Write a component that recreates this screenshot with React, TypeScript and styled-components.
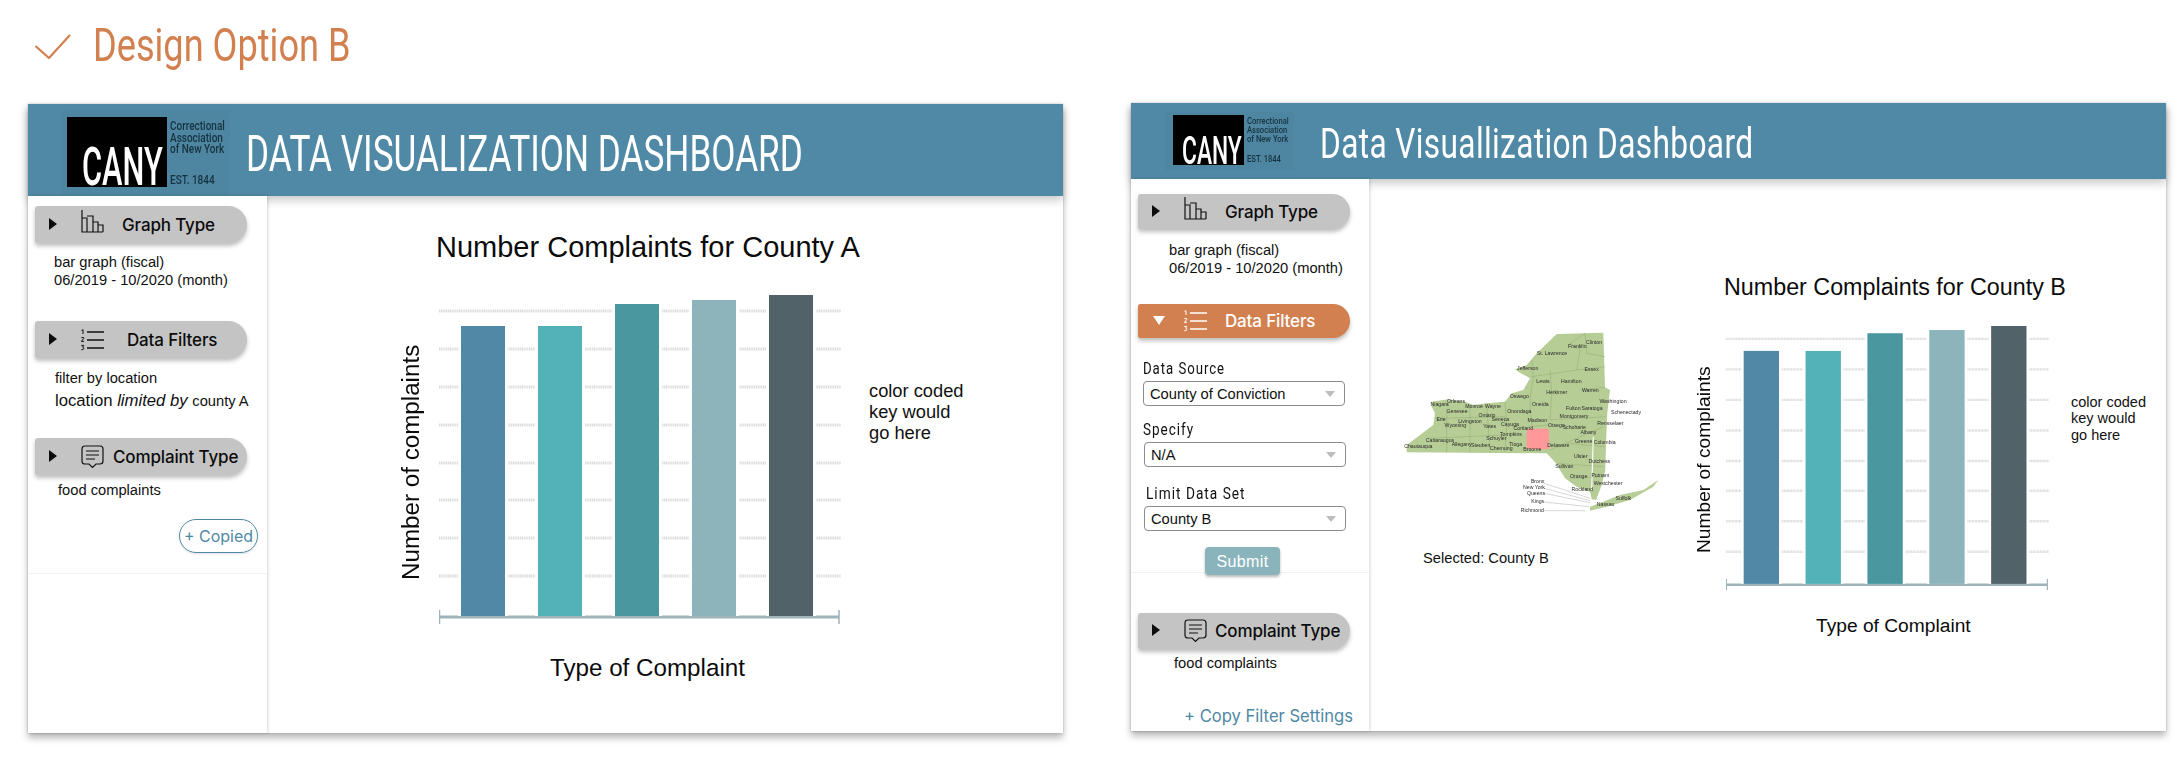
import React from 'react';
import styled, { createGlobalStyle } from 'styled-components';

const Global = createGlobalStyle`
  html, body { margin: 0; padding: 0; background: #fff; }
  body { font-family: "Liberation Sans", Arial, sans-serif; color: #111; }
`;
const NARROW = `Roboto, "Liberation Sans", sans-serif`;
const UI = `Inter, "Liberation Sans", sans-serif`;
const TEAL = '#5089a5';
const ORANGE = '#d2804f';

const Page = styled.div`width: 2184px; height: 780px; overflow: hidden; display: flex; flex-direction: column; padding-left: 28px; box-sizing: border-box;`;
const Heading = styled.div`height: 103px; display: flex; align-items: flex-start; gap: 22px; padding: 22px 0 0 7px; box-sizing: border-box;`;
const CheckMark = styled.svg`margin-top: 12px; flex: none;`;
const HeadingText = styled.h1`
  margin: 0; font: 400 46px/46px ${NARROW}; color: ${ORANGE}; white-space: nowrap;
  transform: scaleX(.786); transform-origin: 0 50%;
`;
const Boards = styled.div`display: flex; gap: 68px; align-items: flex-start;`;
const Card = styled.section<{ $h: number; $mt: number }>`
  width: 1035px; height: ${p => p.$h}px; margin-top: ${p => p.$mt}px; display: flex; flex-direction: column;
  box-shadow: 0 5px 7px rgba(0,0,0,.28), 0 0 2px rgba(0,0,0,.18); background: #fff; position: relative;
`;
const Header = styled.header<{ $h: number; $pt: number; $pl: number; $gap: number }>`
  height: ${p => p.$h}px; background: ${TEAL}; display: flex; align-items: flex-start; flex: none; overflow: visible;
  padding: ${p => p.$pt}px 0 0 ${p => p.$pl}px; gap: ${p => p.$gap}px; box-sizing: border-box;
  box-shadow: 0 4px 9px rgba(0,0,0,.22); position: relative;
`;
const HeaderTitle = styled.div<{ $size: number; $mt: number; $ls: number; $k: number; $w: number }>`
  font: 400 ${p => p.$size}px/1 ${NARROW}; color: #fff; margin-top: ${p => p.$mt}px; letter-spacing: ${p => p.$ls}px; white-space: nowrap;
  width: ${p => p.$w}px; transform: scaleX(${p => p.$k}); transform-origin: 0 50%;
`;
const Plate = styled.div<{ $big: boolean }>`
  display: flex; background: #4e85a1; flex: none;
  width: ${p => (p.$big ? 168 : 129)}px; height: ${p => (p.$big ? 85 : 58)}px;
  padding: ${p => (p.$big ? '7px 0 0 5px' : '3px 0 0 8px')}; box-sizing: border-box;
`;
const Black = styled.div<{ $big: boolean }>`
  width: ${p => (p.$big ? 100 : 71)}px; height: ${p => (p.$big ? 70 : 50)}px; background: #000; flex: none;
  color: #fff; font: 500 ${p => (p.$big ? 54 : 38)}px/1 ${NARROW}; display: flex; align-items: flex-end;
  padding-left: ${p => (p.$big ? 15 : 9)}px; box-sizing: border-box;
`;
const Cany = styled.span<{ $big: boolean }>`
  display: block; width: ${p => (p.$big ? 146 : 103)}px; flex: none; white-space: nowrap;
  margin-bottom: ${p => (p.$big ? -7 : -5)}px; transform: scaleX(${p => (p.$big ? 0.57 : 0.6)}); transform-origin: 0 50%;
`;
const LogoSide = styled.div<{ $big: boolean }>`
  display: flex; flex-direction: column; justify-content: space-between; margin-left: 3px; width: 60px; height: ${p => (p.$big ? 70 : 50)}px; box-sizing: border-box;
  color: #16323f; font: 500 ${p => (p.$big ? 12.5 : 9.5)}px/${p => (p.$big ? 11.5 : 8.8)}px ${NARROW};
  padding: ${p => (p.$big ? '3px 0 2px' : '2px 0 1px')}; white-space: nowrap; transform: scaleX(.8); transform-origin: 0 50%;
`;
const Body = styled.div`display: flex; flex: 1; min-height: 0; position: relative;`;
const Sidebar = styled.aside<{ $w: number; $pt: number; $rule: number }>`
  width: ${p => p.$w}px; flex: none; box-sizing: border-box; padding-top: ${p => p.$pt}px; background: #fff; position: relative; z-index: 1;
  box-shadow: 1px 0 3px rgba(0,0,0,.16);
  &::after { content: ''; position: absolute; left: 0; right: 0; top: ${p => p.$rule}px; height: 1px; background: #f2f2f2; }
`;
const Pill = styled.div<{ $on?: boolean; $h: number; $mt: number }>`
  width: 212px; height: ${p => p.$h}px; margin: ${p => p.$mt}px 0 0 7px; box-sizing: border-box; padding-left: 14px;
  display: flex; align-items: center; background: ${p => (p.$on ? ORANGE : '#c4c4c4')};
  color: ${p => (p.$on ? '#fff' : '#0c0c0c')}; border-radius: 3px 20px 20px 3px; box-shadow: 0 3px 4px rgba(0,0,0,.26);
`;
const Arrow = styled.span`width: 32px; display: flex; flex: none; margin-bottom: 2px;`;
const PillLabel = styled.span<{ $ml: number }>`
  margin-left: ${p => p.$ml}px; padding-top: 1px; font: 500 17px/1 ${UI}; letter-spacing: -0.15px; white-space: nowrap;
`;
const RaisedIcon = styled.svg`margin-bottom: 6px; flex: none;`;
const PillIcon = styled.svg`flex: none;`;
const Detail = styled.div<{ $ml: number; $mt: number }>`
  margin: ${p => p.$mt}px 0 0 ${p => p.$ml}px; font-size: 14.7px; line-height: 18px; color: #111; white-space: nowrap;
`;
const DetailBig = styled.div`margin-top: 3px; font-size: 16.7px; line-height: 21px;`;
const Small = styled.span`font-size: 14.7px;`;
const CopiedRow = styled.div`display: flex; justify-content: flex-end; padding-right: 9px; margin-top: 20px;`;
const Copied = styled.div`
  width: 79px; height: 34px; box-sizing: border-box; border: 1px solid ${TEAL}; border-radius: 17px; color: ${TEAL};
  font: 400 16px/32px ${UI}; text-align: center; white-space: nowrap; box-shadow: 0 1px 2px rgba(0,0,0,.12);
`;
const CopyLink = styled.div`color: ${TEAL}; font: 400 16.6px/22px ${UI}; margin: 33px 0 0 53px; white-space: nowrap;`;
const FieldLabel = styled.div<{ $ml: number; $mt: number; $k: number }>`
  margin: ${p => p.$mt}px 0 0 ${p => p.$ml}px; font: 400 16.5px/20px ${NARROW}; letter-spacing: 1.2px; color: #111;
  white-space: nowrap; transform: scaleX(${p => p.$k}); transform-origin: 0 50%;
`;
const Select = styled.div<{ $ml: number; $mt: number }>`
  width: 202px; height: 25px; margin: ${p => p.$mt}px 0 0 ${p => p.$ml}px; box-sizing: border-box; border: 1px solid #8c8c8c; border-radius: 4px;
  display: flex; align-items: center; justify-content: space-between; padding: 0 9px 0 6px; font-size: 14.7px; color: #111; background: #fff;
  &::after { content: ''; width: 0; height: 0; border-left: 5px solid transparent; border-right: 5px solid transparent; border-top: 6px solid #bdbdbd; }
`;
const SubmitRow = styled.div`display: flex; margin: 16px 0 0 74px; position: relative; z-index: 2;`;
const Submit = styled.div`
  width: 75px; height: 28px; background: #8ab4bc; border-radius: 4px; color: #fff; text-align: center;
  font-size: 16px; line-height: 29px; letter-spacing: .4px; box-shadow: 0 2px 3px rgba(0,0,0,.28);
`;
const Main = styled.main<{ $pl: number; $pt: number }>`flex: 1; display: flex; align-items: flex-start; padding: ${p => p.$pt}px 0 0 ${p => p.$pl}px; min-width: 0;`;
const MapCol = styled.div`width: 290px; flex: none; margin: 36px 14px 0 0;`;
const MapSvg = styled.svg`display: block; filter: blur(.35px);`;
const PlotSvg = styled.svg`display: block; flex: none;`;
const Selected = styled.div`font-size: 14.7px; line-height: 18px; margin: 19px 0 0 33px;`;
const Chart = styled.div`display: flex; flex-direction: column; flex: none;`;
const ChartTitle = styled.div<{ $size: number; $ml: number; $lh: number }>`
  font-size: ${p => p.$size}px; line-height: ${p => p.$lh}px; margin-left: ${p => p.$ml}px; white-space: nowrap; color: #0b0b0b;
`;
const ChartRow = styled.div<{ $mt: number }>`display: flex; align-items: flex-start; margin-top: ${p => p.$mt}px;`;
const YLabel = styled.div<{ $size: number; $w: number; $mt: number; $mr: number; $len: number }>`
  writing-mode: vertical-rl; transform: rotate(180deg); font-size: ${p => p.$size}px; line-height: ${p => p.$w}px; width: ${p => p.$w}px;
  height: ${p => p.$len}px; margin: ${p => p.$mt}px ${p => p.$mr}px 0 0; white-space: nowrap; flex: none; color: #0b0b0b;
`;
const Legend = styled.div<{ $size: number; $lh: number; $ml: number; $mt: number }>`
  font-size: ${p => p.$size}px; line-height: ${p => p.$lh}px; margin: ${p => p.$mt}px 0 0 ${p => p.$ml}px; white-space: nowrap; color: #111;
`;
const XLabel = styled.div<{ $size: number; $ml: number; $mt: number }>`
  font-size: ${p => p.$size}px; line-height: 1.1; margin: ${p => p.$mt}px 0 0 ${p => p.$ml}px; white-space: nowrap; color: #0b0b0b;
`;

const Play = () => <svg width="8" height="12" viewBox="0 0 8 12"><path d="M0 0l8 6-8 6z" fill="#0c0c0c" /></svg>;
const Down = () => <svg width="14" height="9" viewBox="0 0 14 9"><path d="M1 0h12L7 9z" fill="#fff" /></svg>;
const GraphIcon = () => (
  <RaisedIcon width="23" height="23" viewBox="0 0 23 23" fill="none" stroke="#111" strokeWidth="1.2">
    <path d="M1 0v22h21M1 8h5v14M6 8v14M6 6h6v16M12 12h5v10M17 15h5v7" />
  </RaisedIcon>
);
const ListIcon = ({ c }: { c: string }) => (
  <PillIcon width="23" height="22" viewBox="0 0 23 22" fill="none" stroke={c} strokeWidth="1.3">
    <path d="M6 3h17M6 11h17M6 19h17" />
    <path d="M.5 1.500L2 .7V5M.3 8.600h2.400v1L.3 12.400h2.600M.3 16.400h2.500l-1.200 1.800q1.600.2 1.200 1.600-.4 1.400-2.500.8" strokeWidth="1" />
  </PillIcon>
);
const CommentIcon = () => (
  <PillIcon width="23" height="24" viewBox="0 0 23 24" fill="none" stroke="#111" strokeWidth="1.2">
    <path d="M4 1h15q3 0 3 3v12q0 3-3 3h-4l-3.500 3.500L8 19H4q-3 0-3-3V4q0-3 3-3z" />
    <path d="M5 6h13M5 10h13M5 14h9" />
  </PillIcon>
);

const Plot = ({ w }: { w: number }) => {
  const bars = [
    { x: 22, top: 31, c: '#5088a6' }, { x: 99, top: 31, c: '#52b2b8' }, { x: 176, top: 9, c: '#4a979f' },
    { x: 253, top: 5, c: '#8db4bb' }, { x: 330, top: 0, c: '#526269' },
  ];
  const grid = [16, 54, 92, 130, 168, 205, 243, 281];
  return (
    <PlotSvg width={w} height={(w * 330) / 402} viewBox="0 0 402 330">
      {grid.map(y => <line key={y} x1="0" x2="402" y1={y} y2={y} stroke="#dcdcdc" strokeWidth="3" strokeDasharray="1.2 .6" />)}
      <path d="M0.500 322H400" stroke="#9fb3ba" strokeWidth="3" />
      <path d="M0.500 315v14M400 315v14" stroke="#9fb3ba" strokeWidth="1.500" />
      {bars.map(b => <rect key={b.x} x={b.x - 3} y={b.top} width={50} height={321 - b.top} fill="#fff" />)}
      {bars.map(b => <rect key={b.x + 1} x={b.x} y={b.top} width={44} height={321 - b.top} fill={b.c} />)}
    </PlotSvg>
  );
};

const px = (x: number) => x / 3;
const py = (y: number) => y / 3;
const pts = (a: number[][]) => a.map(([x, y]) => `${px(x).toFixed(1)},${py(y).toFixed(1)}`).join(' ');
const STATE = [[125,275],[175,268],[225,275],[250,285],[290,280],[345,275],[365,250],[400,240],[420,205],[385,185],[375,178],[410,165],[440,130],[500,72],[640,68],[645,232],[660,240],[652,310],[648,400],[646,480],[635,525],[618,570],[605,568],[600,545],[560,530],[525,505],[498,460],[470,430],[50,427],[50,405],[130,345],[135,310],[125,290]];
const ISLAND = [[600,590],[640,575],[690,555],[760,540],[805,510],[790,530],[720,570],[650,590],[600,602]];
const BORDERS = [
  [[425,150],[430,200],[420,270],[425,350]], [[480,180],[485,250],[480,330]], [[560,180],[570,120],[540,100],[585,70]], [[585,70],[590,130],[645,140]],
  [[560,180],[645,170]], [[570,240],[645,232]], [[425,200],[560,180]], [[345,275],[350,345],[345,428]], [[240,285],[240,428]],
  [[170,300],[170,428]], [[135,325],[345,320]], [[115,385],[345,375]], [[480,330],[645,320]], [[480,420],[640,350]], [[530,400],[645,410]],
  [[500,460],[640,470]], [[540,505],[640,500]], [[290,280],[300,428]], [[415,350],[480,345]], [[610,380],[605,540]],
];
const LINES = [[[462,520],[600,565]],[[462,535],[600,572]],[[462,550],[600,578]],[[462,576],[598,590]],[[462,602],[585,602]]];
const COUNTIES: [string, number, number][] = [
  ['Clinton',612,101],['Franklin',562,113],['St. Lawrence',486,135],['Jefferson',413,179],['Essex',605,184],['Lewis',459,220],['Hamilton',544,220],['Warren',601,247],['Herkimer',500,253],['Washington',669,278],['Oswego',388,265],['Oneida',451,288],['Niagara',149,287],['Orleans',198,279],['Monroe',252,295],['Wayne',309,293],['Fulton',550,301],['Saratoga',606,301],['Schenectady',708,312],['Genesee',201,310],['Onondaga',388,310],['Ontario',291,320],['Seneca',331,334],['Erie',153,334],['Montgomery',552,325],['Madison',442,337],['Livingston',240,339],['Wyoming',196,350],['Cayuga',360,348],['Otsego',499,352],['Rensselaer',661,346],['Yates',299,355],['Cortland',400,360],['Schoharie',553,358],['Albany',595,372],['Tompkins',363,379],['Schuyler',319,389],['Cattaraugus',150,395],['Greene',581,400],['Columbia',644,403],['Allegany',215,409],['Steuben',272,412],['Chautauqua',85,414],['Chemung',334,420],['Tioga',377,409],['Delaware',505,412],['Broome',427,423],['Ulster',572,445],['Dutchess',628,460],['Sullivan',523,474],['Orange',566,503],['Putnam',631,500],['Westchester',654,526],['Rockland',577,544],['Suffolk',700,570],['Nassau',647,588],
];
const BOROUGHS: [string, number, number][] = [['Bronx',443,520],['New York',432,537],['Queens',438,554],['Kings',443,579],['Richmond',427,605]];

const NyMap = () => (
  <MapSvg width="290" height="220" viewBox="0 0 290 220">
    <polygon points={pts(STATE)} fill="#b7cd96" />
    <polygon points={pts(ISLAND)} fill="#b7cd96" />
    {BORDERS.map((b, i) => <polyline key={i} points={pts(b)} fill="none" stroke="#8fa873" strokeWidth=".5" />)}
    <polyline points={pts(BORDERS[19])} fill="none" stroke="#fff" strokeWidth="1.200" />
    {LINES.map((b, i) => <polyline key={i} points={pts(b)} fill="none" stroke="#bbb" strokeWidth=".6" />)}
    <rect x={px(410)} y={py(356)} width={22.3} height={20.5} fill="#ff9999" />
    {[...COUNTIES, ...BOROUGHS].map(([n, x, y]) => (
      <text key={n} x={px(x)} y={py(y)} textAnchor="middle" fontSize="5.200" fill="#2a2a2a" fontFamily="Liberation Sans, sans-serif">{n}</text>
    ))}
  </MapSvg>
);

const Logo = ({ big }: { big: boolean }) => (
  <Plate $big={big}>
    <Black $big={big}><Cany $big={big}>CANY</Cany></Black>
    <LogoSide $big={big}>
      <div>Correctional<br />Association<br />of New York</div>
      <div>EST. 1844</div>
    </LogoSide>
  </Plate>
);

export default function App() {
  return (
    <Page>
      <Global />
      <Heading>
        <CheckMark width="36" height="25" viewBox="0 0 36 25" fill="none" stroke={ORANGE} strokeWidth="2.2">
          <path d="M.5 12L14 24 35 1" />
        </CheckMark>
        <HeadingText>Design Option B</HeadingText>
      </Heading>
      <Boards>
        <Card $h={629} $mt={1}>
          <Header $h={92} $pt={6} $pl={34} $gap={16}>
            <Logo big />
            <HeaderTitle $size={50} $mt={19} $ls={0} $k={0.703} $w={790}>DATA VISUALIZATION DASHBOARD</HeaderTitle>
          </Header>
          <Body>
            <Sidebar $w={239} $pt={10} $rule={377}>
              <Pill $h={37} $mt={0}><Arrow><Play /></Arrow><GraphIcon /><PillLabel $ml={18}>Graph Type</PillLabel></Pill>
              <Detail $ml={26} $mt={10}>bar graph (fiscal)<br />06/2019 - 10/2020 (month)</Detail>
              <Pill $h={37} $mt={32}><Arrow><Play /></Arrow><ListIcon c="#111" /><PillLabel $ml={23}>Data Filters</PillLabel></Pill>
              <Detail $ml={27} $mt={11}>filter by location
                <DetailBig>location <i>limited by</i> <Small>county A</Small></DetailBig>
              </Detail>
              <Pill $h={37} $mt={26}><Arrow><Play /></Arrow><CommentIcon /><PillLabel $ml={9}>Complaint Type</PillLabel></Pill>
              <Detail $ml={30} $mt={6}>food complaints</Detail>
              <CopiedRow><Copied>+ Copied</Copied></CopiedRow>
            </Sidebar>
            <Main $pl={132} $pt={33}>
              <Chart>
                <ChartTitle $size={29} $lh={36} $ml={37}>Number Complaints for County A</ChartTitle>
                <ChartRow $mt={30}>
                  <YLabel $size={24.2} $w={24} $mt={50} $mr={16} $len={235}>Number of complaints</YLabel>
                  <Plot w={402} />
                  <Legend $size={18.3} $lh={21} $ml={28} $mt={85}>color coded<br />key would<br />go here</Legend>
                </ChartRow>
                <XLabel $size={24.2} $ml={151} $mt={30}>Type of Complaint</XLabel>
              </Chart>
            </Main>
          </Body>
        </Card>
        <Card $h={628} $mt={0}>
          <Header $h={76} $pt={9} $pl={34} $gap={26}>
            <Logo big={false} />
            <HeaderTitle $size={43} $mt={10} $ls={0.5} $k={0.736} $w={560}>Data Visuallization Dashboard</HeaderTitle>
          </Header>
          <Body>
            <Sidebar $w={238} $pt={15} $rule={393}>
              <Pill $h={35} $mt={0}><Arrow><Play /></Arrow><GraphIcon /><PillLabel $ml={18}>Graph Type</PillLabel></Pill>
              <Detail $ml={38} $mt={12}>bar graph (fiscal)<br />06/2019 - 10/2020 (month)</Detail>
              <Pill $on $h={34} $mt={27}><Arrow><Down /></Arrow><ListIcon c="#fff" /><PillLabel $ml={18}>Data Filters</PillLabel></Pill>
              <FieldLabel $ml={12} $mt={21} $k={0.8}>Data Source</FieldLabel>
              <Select $ml={12} $mt={2}>County of Conviction</Select>
              <FieldLabel $ml={12} $mt={14} $k={0.82}>Specify</FieldLabel>
              <Select $ml={13} $mt={2}>N/A</Select>
              <FieldLabel $ml={15} $mt={17} $k={0.83}>Limit Data Set</FieldLabel>
              <Select $ml={13} $mt={2}>County B</Select>
              <SubmitRow><Submit>Submit</Submit></SubmitRow>
              <Pill $h={36} $mt={38}><Arrow><Play /></Arrow><CommentIcon /><PillLabel $ml={8}>Complaint Type</PillLabel></Pill>
              <Detail $ml={43} $mt={5}>food complaints</Detail>
              <CopyLink>+ Copy Filter Settings</CopyLink>
            </Sidebar>
            <Main $pl={21} $pt={95}>
              <MapCol>
                <NyMap />
                <Selected>Selected: County B</Selected>
              </MapCol>
              <Chart>
                <ChartTitle $size={23.3} $lh={26} $ml={30}>Number Complaints for County B</ChartTitle>
                <ChartRow $mt={26}>
                  <YLabel $size={19.2} $w={20} $mt={41} $mr={12} $len={186}>Number of complaints</YLabel>
                  <Plot w={323} />
                  <Legend $size={14.5} $lh={16.3} $ml={22} $mt={68}>color coded<br />key would<br />go here</Legend>
                </ChartRow>
                <XLabel $size={19.2} $ml={122} $mt={24}>Type of Complaint</XLabel>
              </Chart>
            </Main>
          </Body>
        </Card>
      </Boards>
    </Page>
  );
}
